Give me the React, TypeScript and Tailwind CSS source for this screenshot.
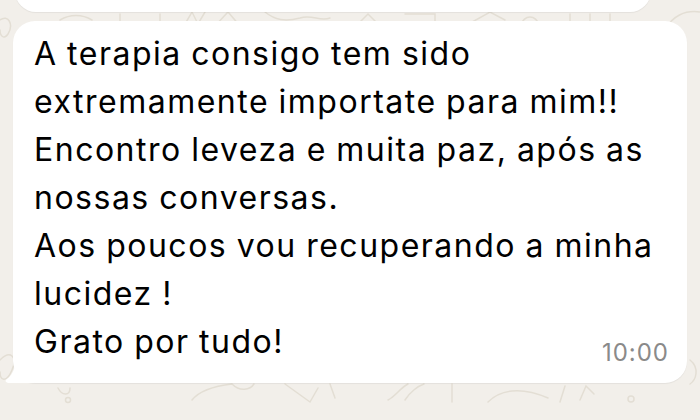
const lines = [
  "A terapia consigo tem sido",
  "extremamente importate para mim!!",
  "Encontro leveza e muita paz, após as",
  "nossas conversas.",
  "Aos poucos vou recuperando a minha",
  "lucidez !",
  "Grato por tudo!",
];

// faint wallpaper doodles
function Doodles() {
  return (
    <svg className="absolute inset-0" width="700" height="420" viewBox="0 0 700 420" fill="none" stroke="#e3ded4" strokeWidth="1.5" strokeLinecap="round">
      <path d="M0 20 C8 14 14 24 8 34 C4 40 0 36 0 30" />
      <path d="M60 20 C70 14 82 14 92 20" />
      <path d="M120 14 L120 26 M160 14 L160 26" />
      <path d="M185 24 L192 12 L198 24 L205 12" />
      <path d="M215 26 L228 12 L240 26" />
      <path d="M265 12 C275 20 285 22 300 18 C312 14 320 22 330 18" />
      <path d="M360 22 L368 14 L376 22" />
      <path d="M405 14 L435 14 L435 26" />
      <path d="M465 26 L490 12 L505 20" />
      <path d="M520 26 C525 14 535 14 540 26" />
      <path d="M570 14 L570 26 M590 14 L590 26 M610 14 L610 26" />
      <path d="M665 30 C672 16 685 10 700 12" />
      <path d="M0 360 C10 350 18 356 12 370 C6 384 0 380 0 372" />
      <path d="M58 388 C62 396 70 396 70 388" />
      <path d="M192 400 C200 390 215 386 232 384 M232 384 C240 392 250 390 254 384" />
      <path d="M285 384 L310 402 L318 388 M330 384 L335 398" />
      <path d="M388 400 C396 396 400 388 408 384 M405 400 C410 392 418 386 424 384" />
      <path d="M452 384 L452 402" />
      <path d="M488 402 C500 390 520 386 548 398" />
      <path d="M560 402 L565 386 M580 400 L586 386 L594 394" />
      <circle cx="631" cy="399" r="3" />
      <circle cx="68" cy="400" r="2.5" />
      <path d="M690 360 C700 368 696 380 690 384" />
    </svg>
  );
}

export default function App() {
  return (
    <div className="w-[700px] h-[420px] overflow-hidden bg-[#f2efea] relative" style={{ fontFamily: "Inter, 'Noto Sans', sans-serif" }}>
      <Doodles />

      {/* previous bubble, cut off at the top */}
      <div className="relative ml-[15px] -mt-[30px] w-[636px] h-[42px] rounded-[22px] bg-white shadow-[0_1px_1px_rgba(0,0,0,0.06)]" />

      {/* message bubble */}
      <div className="relative ml-[13px] mt-[9px] w-[674px] h-[362px] rounded-[22px] bg-white shadow-[0_1px_1px_rgba(0,0,0,0.06)] pl-[21px] pt-[9px]">
        <svg className="absolute -left-[9px] bottom-0" width="30" height="28" viewBox="0 0 30 28">
          <path d="M30 0 L30 28 L6 28 C2 28 0 26 3 24 C10 19 12 10 12 0 Z" fill="#ffffff" />
        </svg>
        <div className="relative text-[32px] leading-[48px] tracking-[1.5px] [word-spacing:-1px] text-black">
          {lines.map((l) => (
            <div key={l} className="whitespace-nowrap">{l}</div>
          ))}
        </div>
        <span className="absolute right-[18px] bottom-[12px] text-[24px] tracking-[1px] text-[#8a8a8a]">10:00</span>
      </div>
    </div>
  );
}
